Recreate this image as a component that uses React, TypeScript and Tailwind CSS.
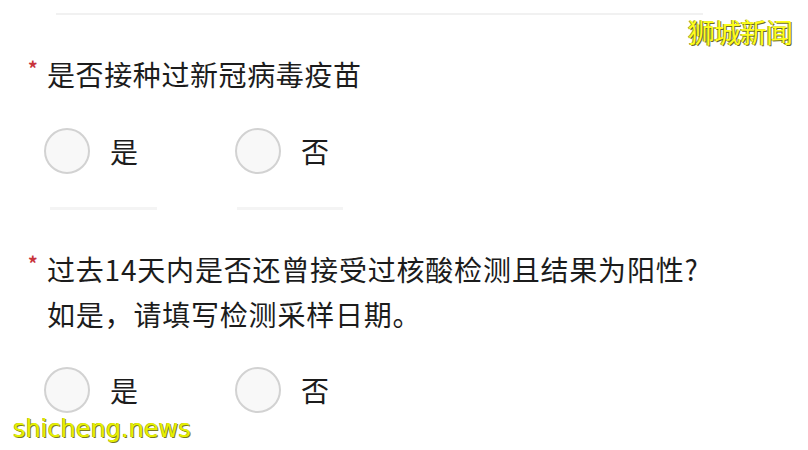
import React from "react";

const cjk = { fontFamily: '"Noto Sans CJK SC", "Noto Sans", sans-serif' };

function Radio({ label }: { label: string }) {
  return (
    <div className="flex items-center w-[191px]">
      <div className="w-[46px] h-[46px] rounded-full border-2 border-[#d2d2d2] bg-[#f8f8f8] shrink-0" />
      <span className="ml-[20px] text-[28px] leading-[40px] text-[#1c1c1c]">{label}</span>
    </div>
  );
}

export default function App() {
  return (
    <div className="relative w-[808px] h-[450px] overflow-hidden bg-white" style={cjk}>
      <div className="ml-[56px] mt-[13px] w-[647px] h-[2px] bg-[#f1f1f1]" />

      <div className="mt-[39px] flex items-start">
        <span className="w-[47px] pl-[28px] text-[19px] leading-[28px] font-bold text-[#c8333a]">*</span>
        <span className="text-[28px] leading-[40px] tracking-[0.6px] text-[#1c1c1c]">是否接种过新冠病毒疫苗</span>
      </div>

      <div className="mt-[34px] ml-[44px] flex">
        <Radio label="是" />
        <Radio label="否" />
      </div>

      <div className="mt-[33px] flex">
        <div className="ml-[50px] w-[107px] h-[3px] bg-[#f4f4f4]" />
        <div className="ml-[80px] w-[106px] h-[3px] bg-[#f4f4f4]" />
      </div>

      <div className="mt-[37px] flex items-start">
        <span className="w-[47px] pl-[28px] text-[19px] leading-[32px] font-bold text-[#c8333a]">*</span>
        <div className="text-[28px] leading-[45px] tracking-[0.8px] text-[#1c1c1c]">
          <div>过去14天内是否还曾接受过核酸检测且结果为阳性?</div>
          <div>如是，请填写检测采样日期。</div>
        </div>
      </div>

      <div className="mt-[30px] ml-[44px] flex">
        <Radio label="是" />
        <Radio label="否" />
      </div>

      <div
        className="absolute left-[688px] top-[14px] text-[27px] leading-[36px] tracking-[-1px] text-[#ffff1a] [text-shadow:1px_1px_0_#6b6b2a,-1px_0_0_#9a9a40]"
        style={cjk}
      >
        狮城新闻
      </div>
      <div
        className="absolute left-[13px] top-[413px] text-[24px] leading-[32px] text-[#e6f000] [text-shadow:1px_1px_0_#7a7a20,-0.5px_-0.5px_0_#a0a040]"
        style={{ fontFamily: '"DejaVu Sans", sans-serif' }}
      >
        shicheng.news
      </div>
    </div>
  );
}
